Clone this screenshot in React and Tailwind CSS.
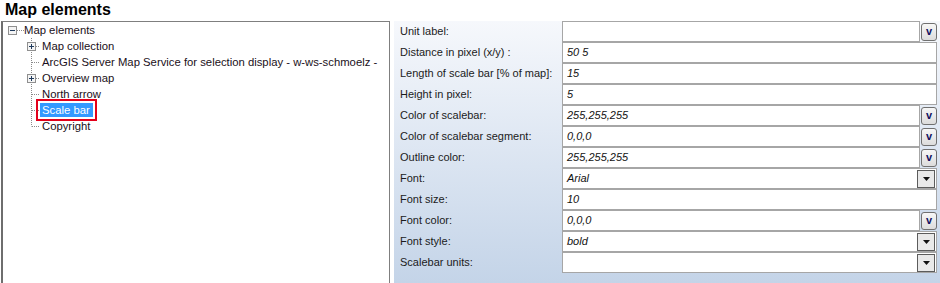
// App.jsx
import React from 'react';

const rows = [
  { label: 'Unit label:', value: '', kind: 'pick' },
  { label: 'Distance in pixel (x/y) :', value: '50 5', kind: 'text' },
  { label: 'Length of scale bar [% of map]:', value: '15', kind: 'text' },
  { label: 'Height in pixel:', value: '5', kind: 'text' },
  { label: 'Color of scalebar:', value: '255,255,255', kind: 'pick' },
  { label: 'Color of scalebar segment:', value: '0,0,0', kind: 'pick' },
  { label: 'Outline color:', value: '255,255,255', kind: 'pick' },
  { label: 'Font:', value: 'Arial', kind: 'drop' },
  { label: 'Font size:', value: '10', kind: 'text' },
  { label: 'Font color:', value: '0,0,0', kind: 'pick' },
  { label: 'Font style:', value: 'bold', kind: 'drop' },
  { label: 'Scalebar units:', value: '', kind: 'drop' },
];

const children = [
  { name: 'Map collection', expand: true },
  { name: 'ArcGIS Server Map Service for selection display - w-ws-schmoelz -' },
  { name: 'Overview map', expand: true },
  { name: 'North arrow' },
  { name: 'Scale bar', selected: true },
  { name: 'Copyright', last: true },
];

const Expander = ({ x, minus }) => (
  <>
    <rect x={x + 0.5} y="4.5" width="8" height="8" fill="#f4f4f4" stroke="#8f8f8f" />
    <line x1={x + 2} y1="8.5" x2={x + 7} y2="8.5" stroke="#1e395b" />
    {!minus && <line x1={x + 4.5} y1="6" x2={x + 4.5} y2="11" stroke="#1e395b" />}
  </>
);

const RootConnector = () => (
  <svg width="21" height="16" className="shrink-0">
    <line x1="14" y1="8.5" x2="21" y2="8.5" stroke="#8a8a8a" strokeDasharray="1 1" />
    <Expander x={5} minus />
  </svg>
);

const ChildConnector = ({ expand, last }) => (
  <svg width="18" height="16" className="shrink-0">
    <line x1="9.5" y1="0" x2="9.5" y2={last ? 8.5 : 16} stroke="#8a8a8a" strokeDasharray="1 1" />
    <line x1="10" y1="8.5" x2="19" y2="8.5" stroke="#8a8a8a" strokeDasharray="1 1" />
    {expand && <Expander x={5} />}
  </svg>
);

const PickButton = () => (
  <div className="ml-[1px] w-[16px] h-[18px] self-center rounded-[3px] border border-[#707070] bg-gradient-to-b from-[#f7f7f7] to-[#dcdcdc] flex items-center justify-center text-[11px] font-bold leading-none text-[#101060] pb-[1px]">
    v
  </div>
);

const DropButton = () => (
  <div className="mr-[1px] w-[18px] h-[18px] self-center border border-[#5c5c5c] bg-[#e9e9e9] flex items-center justify-center">
    <svg width="7" height="4" viewBox="0 0 7 4"><path d="M0 0h7L3.5 4z" fill="#111" /></svg>
  </div>
);

const PropRow = ({ label, value, kind }) => (
  <div className="flex h-[21px]">
    <div className="w-[168px] shrink-0 pl-[6px] flex items-center text-[11px] text-[#1b1b1b]">{label}</div>
    <div className="flex flex-1 mr-[3px]">
      <div className="flex flex-1 bg-white border border-[#a6a6a6]">
        <div className="flex-1 pl-[4px] flex items-center text-[11px] italic text-[#111]">{value}</div>
        {kind === 'drop' && <DropButton />}
      </div>
      {kind === 'pick' && <PickButton />}
    </div>
  </div>
);

export default function App() {
  return (
    <div className="w-[940px] h-[283px] overflow-hidden bg-white font-['Liberation_Sans',Arial,sans-serif]">
      <div className="h-[21px] pl-[5px] pt-[1px] text-[16px] font-bold leading-[18px] text-black">Map elements</div>
      <div className="flex">
        <div className="ml-[1px] w-[389px] h-[270px] border border-[#7f7f7f] border-l-2 border-l-[#6e6e6e] shrink-0">
          <div className="flex h-[16px] items-center">
            <RootConnector />
            <span className="text-[11.3px] leading-[16px] text-[#1a1020]">Map elements</span>
          </div>
          {children.map(c => (
            <div key={c.name} className="flex h-[16px] items-center pl-[19px]">
              <ChildConnector expand={c.expand} last={c.last} />
              <span
                className={`text-[11.3px] whitespace-nowrap pl-[2px] ${
                  c.selected
                    ? 'pr-[3px] bg-[#3399ff] text-white leading-[14px] outline-2 outline-offset-2 outline-[#e3001b]'
                    : 'pr-[2px] text-[#1a1020] leading-[16px]'
                }`}
              >
                {c.name}
              </span>
            </div>
          ))}
        </div>
        <div className="ml-[4px] flex-1 h-[262px] bg-gradient-to-b from-[#f6f8fc] to-[#c4d4e8]">
          {rows.map(r => (
            <PropRow key={r.label} {...r} />
          ))}
        </div>
      </div>
    </div>
  );
}
